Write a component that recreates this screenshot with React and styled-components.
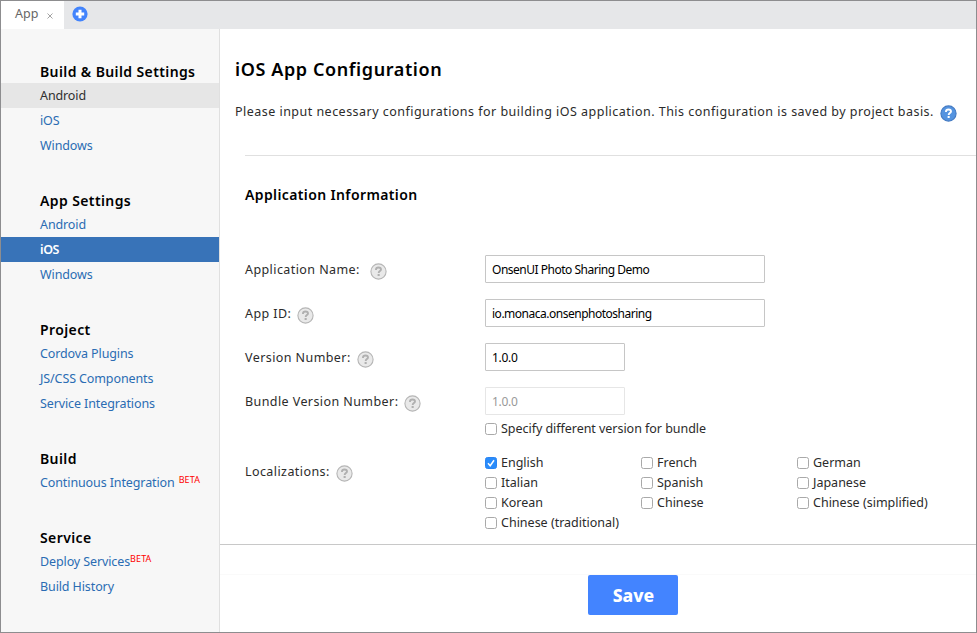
import React from "react";
import styled, { createGlobalStyle, css } from "styled-components";

const GlobalStyle = createGlobalStyle`
  * { box-sizing: border-box; }
  body { margin: 0; background: #fff; overflow: hidden; }
  button, input { font: inherit; }
`;

const Window = styled.div`
  display: flex;
  flex-direction: column;
  width: 977px;
  height: 633px;
  border: 1px solid #8d8d8f;
  background: #fff;
  color: #2b2b2b;
  font-family: "Noto Sans", "Open Sans", sans-serif;
  font-size: 12.5px;
  white-space: nowrap;
`;

const TabBar = styled.div`
  display: flex;
  align-items: center;
  flex: 0 0 28px;
  background: #e6e7e9;
`;

const Tab = styled.div`
  display: flex;
  align-items: center;
  gap: 9px;
  width: 63px;
  height: 28px;
  padding: 0 0 3px 14px;
  background: #fff;
  color: #666;
  font-size: 12.5px;
`;

const CloseIcon = styled.svg`
  width: 6px;
  height: 6px;
  margin-top: 4px;
  flex: none;
`;

const AddIcon = styled.svg`
  width: 16px;
  height: 16px;
  margin: 0 0 2px 8px;
`;

const Body = styled.div`
  display: flex;
  flex: 1;
  min-height: 0;
`;

const Sidebar = styled.nav`
  display: flex;
  flex-direction: column;
  gap: 32px;
  flex: 0 0 219px;
  padding-top: 32px;
  background: #f7f7f7;
  border-right: 1px solid #e0e0e0;
`;

const GroupTitle = styled.h3`
  margin: 0;
  height: 22px;
  padding-left: 39px;
  color: #000;
  font-size: 14px;
  font-weight: 600;
  line-height: 22px;
  letter-spacing: 0.39px;
`;

const NavItem = styled.a`
  display: flex;
  height: 25px;
  padding-left: 39px;
  line-height: 25px;
  color: #2a6cb3;
  letter-spacing: -0.11px;
  ${(p) => p.$state === "hover" && css`background: #e6e6e6; color: #2f2f2f;`}
  ${(p) => p.$state === "active" && css`background: #3873b8; color: #fff; font-weight: 600; letter-spacing: -0.4px;`}
`;

const Beta = styled.span`
  margin-left: ${(p) => (p.$spaced ? 4 : 0)}px;
  color: #f00;
  font-size: 9px;
  line-height: 19px;
  letter-spacing: 0.1px;
`;

const Main = styled.main`
  display: flex;
  flex-direction: column;
  flex: 1;
  min-width: 0;
`;

const Intro = styled.header`
  height: 126px;
  padding: 26px 0 0 15px;
`;

const Title = styled.h1`
  margin: 0;
  height: 28px;
  color: #000;
  font-size: 18px;
  font-weight: 600;
  line-height: 28px;
  letter-spacing: 0.6px;
`;

const Description = styled.p`
  display: flex;
  align-items: center;
  gap: 6px;
  margin: 17px 0 0;
  height: 22px;
  letter-spacing: 0.473px;
`;

const HelpIcon = styled.svg`
  flex: none;
  width: 17px;
  height: 17px;
  margin-top: 4px;
`;

const Form = styled.section`
  flex: 0 0 389px;
  padding-left: 25px;
`;

const FormContent = styled.div`
  padding-top: 28px;
  border-top: 1px solid #e0e0e0;
`;

const SectionTitle = styled.h2`
  margin: 0 0 49px;
  height: 22px;
  color: #000;
  font-size: 14px;
  font-weight: 600;
  line-height: 22px;
  letter-spacing: 0.38px;
`;

const Field = styled.div`
  display: grid;
  grid-template-columns: 240px 1fr;
  align-items: start;
  margin-bottom: ${(p) => p.$after ?? 16}px;
`;

const Label = styled.div`
  display: flex;
  align-items: center;
  gap: ${(p) => p.$gap ?? 6}px;
  height: 28px;
  margin-top: ${(p) => p.$drop ?? 0}px;
  letter-spacing: 0.42px;
`;

const Input = styled.input`
  display: block;
  width: ${(p) => (p.$short ? 140 : 280)}px;
  height: 28px;
  padding: 0 6px 0 6px;
  border: 1px solid #c6c6c6;
  border-radius: 1px;
  background: #fff;
  color: #000;
  font-size: 12px;
  letter-spacing: ${(p) => (p.$short ? -0.3 : -0.49)}px;
  outline: none;
  &:disabled { border-color: #e6e6e6; color: #999; }
`;

const Choice = styled.label`
  display: flex;
  align-items: center;
  gap: 4px;
  height: 20px;
`;

const BundleChoice = styled(Choice)`
  margin-top: 3px;
  letter-spacing: -0.04px;
`;

const Box = styled.svg`
  flex: none;
  width: 12px;
  height: 12px;
  margin-top: 1px;
`;

const Languages = styled.div`
  display: grid;
  grid-template-columns: 156px 156px auto;
`;

const Footer = styled.footer`
  flex: 1;
  padding-top: 29px;
  border-top: 1px solid #c8c8c8;
`;

const Actions = styled.div`
  display: flex;
  padding-left: 368px;
  border-top: 1px solid #fafafa;
`;

const SaveButton = styled.button`
  width: 90px;
  height: 40px;
  padding: 0 0 0 1px;
  border: 0;
  border-radius: 2px;
  background: #4384ff;
  color: #fff;
  font-size: 17.5px;
  font-weight: 800;
`;

function Help({ blue }) {
  const mark = blue ? "#fff" : "#b0b0b0";
  return (
    <HelpIcon viewBox="0 0 17 17">
      <circle cx="8.5" cy="8.5" r="7.6" fill={blue ? "#5594e0" : "#e9e9e9"} stroke={blue ? "#4279c2" : "#b5b5b5"} strokeWidth="1.1" />
      <path d="M6 7V6.6C6 5.3 7 4.5 8.5 4.5S11 5.3 11 6.5C11 8 8.7 8.2 8.7 9.9" fill="none" stroke={mark} strokeWidth="1.9" />
      <rect x="7.6" y="11" width="2.1" height="2" fill={mark} />
    </HelpIcon>
  );
}

function CheckBox({ checked }) {
  return (
    <Box viewBox="0 0 12 12">
      <rect x=".5" y=".5" width="11" height="11" rx="2" fill={checked ? "#2a8cfb" : "#fff"} stroke={checked ? "#2a84f2" : "#a9a9a9"} />
      {checked && <path d="M3 6.3L5.2 8.7L9 3.3" fill="none" stroke="#fff" strokeWidth="1.5" />}
    </Box>
  );
}

const groups = [
  ["Build & Build Settings", [["Android", "hover"], ["iOS"], ["Windows"]]],
  ["App Settings", [["Android"], ["iOS", "active"], ["Windows"]]],
  ["Project", [["Cordova Plugins"], ["JS/CSS Components"], ["Service Integrations"]]],
  ["Build", [["Continuous Integration", "", "spaced"]]],
  ["Service", [["Deploy Services", "", "tight"], ["Build History"]]],
];

const languages = [
  "English", "French", "German",
  "Italian", "Spanish", "Japanese",
  "Korean", "Chinese", "Chinese (simplified)",
  "Chinese (traditional)",
];

export default function App() {
  return (
    <Window>
      <GlobalStyle />
      <TabBar>
        <Tab>
          App
          <CloseIcon viewBox="0 0 6 6">
            <path d="M.5 .5L5.5 5.5M5.5 .5L.5 5.5" stroke="#999" strokeWidth=".9" />
          </CloseIcon>
        </Tab>
        <AddIcon viewBox="0 0 16 16">
          <circle cx="8" cy="8" r="7.6" fill="#4384fc" />
          <path d="M8 3.8V12.2M3.8 8H12.2" stroke="#fff" strokeWidth="3" />
        </AddIcon>
      </TabBar>
      <Body>
        <Sidebar>
          {groups.map(([title, items]) => (
            <div key={title}>
              <GroupTitle>{title}</GroupTitle>
              {items.map(([name, state, beta]) => (
                <NavItem key={name} $state={state}>
                  {name}
                  {beta && <Beta $spaced={beta === "spaced"}>BETA</Beta>}
                </NavItem>
              ))}
            </div>
          ))}
        </Sidebar>
        <Main>
          <Intro>
            <Title>iOS App Configuration</Title>
            <Description>
              Please input necessary configurations for building iOS application. This configuration is saved by project basis.
              <Help blue />
            </Description>
          </Intro>
          <Form>
            <FormContent>
              <SectionTitle>Application Information</SectionTitle>
              <Field>
                <Label $gap={10}>Application Name:<Help /></Label>
                <Input defaultValue="OnsenUI Photo Sharing Demo" />
              </Field>
              <Field>
                <Label>App ID:<Help /></Label>
                <Input defaultValue="io.monaca.onsenphotosharing" />
              </Field>
              <Field>
                <Label>Version Number:<Help /></Label>
                <Input $short defaultValue="1.0.0" />
              </Field>
              <Field $after={14}>
                <Label>Bundle Version Number:<Help /></Label>
                <div>
                  <Input $short disabled defaultValue="1.0.0" />
                  <BundleChoice><CheckBox />Specify different version for bundle</BundleChoice>
                </div>
              </Field>
              <Field $after={0}>
                <Label $drop={5}>Localizations:<Help /></Label>
                <Languages>
                  {languages.map((name) => (
                    <Choice key={name}><CheckBox checked={name === "English"} />{name}</Choice>
                  ))}
                </Languages>
              </Field>
            </FormContent>
          </Form>
          <Footer>
            <Actions><SaveButton>Save</SaveButton></Actions>
          </Footer>
        </Main>
      </Body>
    </Window>
  );
}
